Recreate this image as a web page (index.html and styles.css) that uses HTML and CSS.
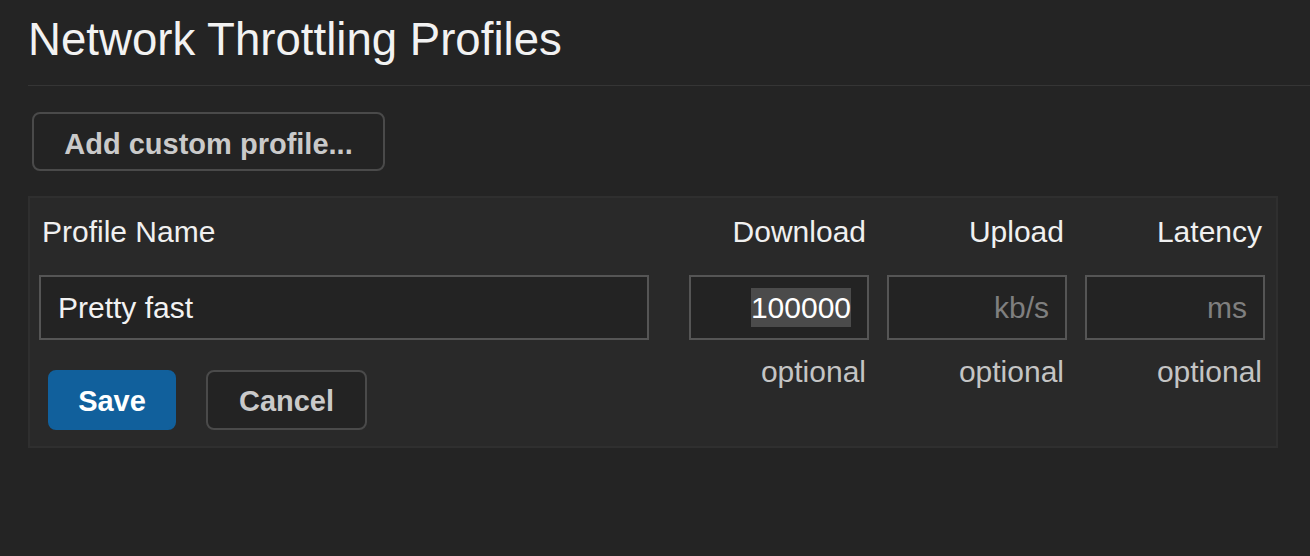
FILE: index.html
```html
<!DOCTYPE html>
<html>
<head>
<meta charset="utf-8">
<link rel="stylesheet" href="styles.css">
</head>
<body>
<div class="page">
  <header class="header">
    <h1 class="title">Network Throttling Profiles</h1>
  </header>
  <div class="content">
    <button class="btn btn-outline add-btn">Add custom profile...</button>
    <div class="editor">
      <div class="grid">
        <div class="label">Profile Name</div>
        <div class="label right">Download</div>
        <div class="label right">Upload</div>
        <div class="label right">Latency</div>

        <div class="name-cell"><div class="field">Pretty fast</div></div>
        <div class="field num"><span class="sel">100000</span></div>
        <div class="field num placeholder">kb/s</div>
        <div class="field num placeholder">ms</div>

        <div class="actions">
          <button class="btn btn-primary save-btn">Save</button>
          <button class="btn btn-outline cancel-btn">Cancel</button>
        </div>
        <div class="hint">optional</div>
        <div class="hint">optional</div>
        <div class="hint">optional</div>
      </div>
    </div>
  </div>
</div>
</body>
</html>
```

FILE: styles.css
```css
html, body {
  margin: 0;
  padding: 0;
  background: #242424;
}
body {
  font-family: "Liberation Sans", Arial, sans-serif;
  color: #eeeeee;
  width: 1310px;
  height: 556px;
  overflow: hidden;
}
.header {
  margin-left: 28px;
  padding-top: 18px;
  padding-bottom: 23px;
  border-bottom: 1px solid #353535;
}
.title {
  margin: 0;
  font-size: 45.6px;
  font-weight: normal;
  line-height: 44px;
  color: #f2f2f2;
}
.content {
  padding: 26px 32px 0 28px;
}
.btn {
  font-family: "Liberation Sans", Arial, sans-serif;
  font-weight: bold;
  font-size: 29px;
  border-radius: 8px;
  cursor: pointer;
  box-sizing: border-box;
}
.btn-outline {
  background: #232323;
  border: 2px solid #4a4a4a;
  color: #cacaca;
}
.btn-primary {
  background: #11609c;
  border: 2px solid #11609c;
  color: #ffffff;
}
.add-btn {
  margin-left: 4px;
  width: 353px;
  height: 59px;
  padding: 5px 0 0;
}
.save-btn,
.cancel-btn {
  padding: 2px 0 0;
}
.editor {
  margin-top: 25px;
  background: #292929;
  border: 2px solid #2f2f2f;
  padding: 16px 11px 16px 9px;
}
.grid {
  display: grid;
  grid-template-columns: 1fr 180px 180px 180px;
  column-gap: 18px;
  row-gap: 0;
}
.label {
  font-size: 30px;
  line-height: 36px;
  color: #f0f0f0;
  padding: 0 3px;
  margin-bottom: 25px;
}
.right {
  text-align: right;
}
.name-cell {
  padding-right: 22px;
}
.field {
  box-sizing: border-box;
  height: 65px;
  border: 2px solid #555555;
  background: #232323;
  font-size: 30px;
  line-height: 61px;
  padding: 0 16px 0 17px;
  color: #f2f2f2;
  white-space: nowrap;
}
.num {
  text-align: right;
}
.placeholder {
  color: #7f7f7f;
}
.sel {
  background: #4b4b4b;
  color: #ffffff;
  padding: 3px 0;
}
.actions {
  display: flex;
  gap: 30px;
  margin-top: 30px;
  margin-left: 9px;
}
.save-btn {
  width: 128px;
  height: 60px;
}
.cancel-btn {
  width: 161px;
  height: 60px;
}
.hint {
  margin-top: 14px;
  font-size: 30px;
  line-height: 36px;
  color: #c4c4c4;
  text-align: right;
  padding-right: 3px;
}
```
